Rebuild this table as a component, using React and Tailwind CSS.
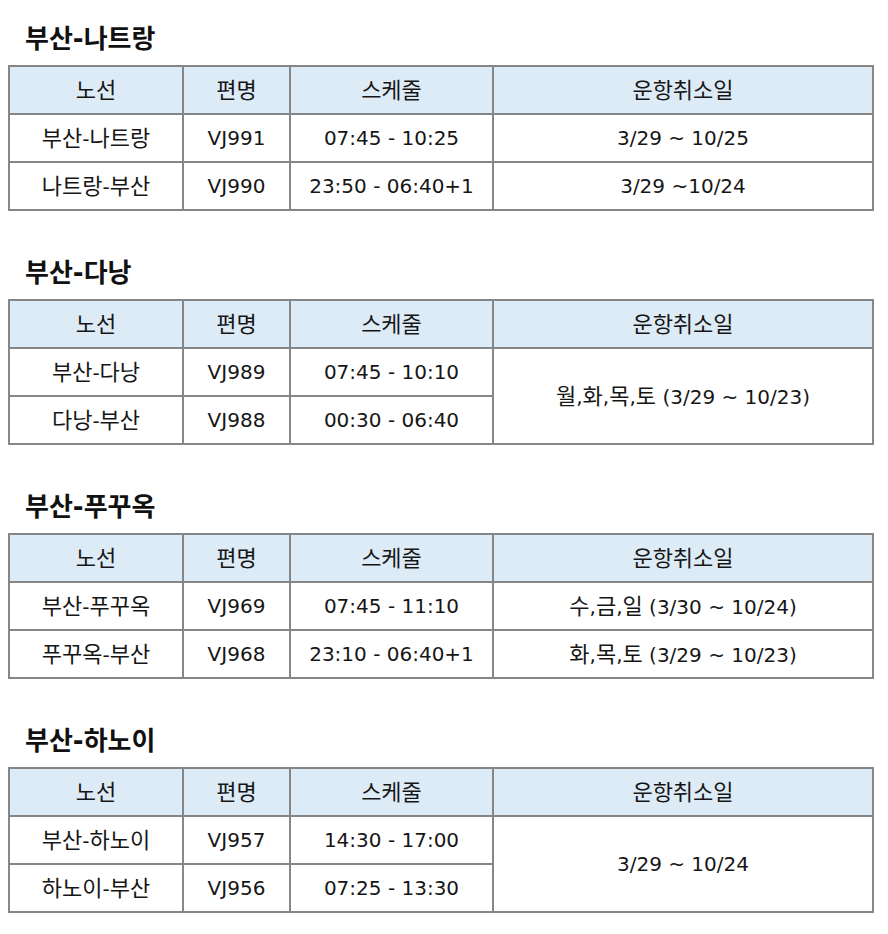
const sections = [
  {
    title: "부산-나트랑",
    rows: [
      ["부산-나트랑", "VJ991", "07:45 - 10:25", "3/29 ~ 10/25"],
      ["나트랑-부산", "VJ990", "23:50 - 06:40+1", "3/29 ~10/24"],
    ],
  },
  {
    title: "부산-다낭",
    merged: "월,화,목,토 (3/29 ~ 10/23)",
    rows: [
      ["부산-다낭", "VJ989", "07:45 - 10:10"],
      ["다낭-부산", "VJ988", "00:30 - 06:40"],
    ],
  },
  {
    title: "부산-푸꾸옥",
    rows: [
      ["부산-푸꾸옥", "VJ969", "07:45 - 11:10", "수,금,일 (3/30 ~ 10/24)"],
      ["푸꾸옥-부산", "VJ968", "23:10 - 06:40+1", "화,목,토 (3/29 ~ 10/23)"],
    ],
  },
  {
    title: "부산-하노이",
    merged: "3/29 ~ 10/24",
    rows: [
      ["부산-하노이", "VJ957", "14:30 - 17:00"],
      ["하노이-부산", "VJ956", "07:25 - 13:30"],
    ],
  },
];

const headers = ["노선", "편명", "스케줄", "운항취소일"];

// hangul runs get a slightly larger size so they match the latin widths
function Txt({ text }) {
  return text.split(/([가-힣]+)/).map((part, i) =>
    /[가-힣]/.test(part) ? (
      <span key={i} className="text-[22px]">
        {part}
      </span>
    ) : (
      <span key={i}>{part}</span>
    )
  );
}

const cell = "border-2 border-[#868686] text-center align-middle h-[48px] p-0";

function RouteTable({ section }) {
  return (
    <section>
      <h2 className="pl-[17px] mb-[10px] text-[26px] leading-8 font-bold text-[#111]">
        {section.title}
      </h2>
      <table className="table-fixed border-collapse border-2 border-[#868686] w-[866px]">
        <colgroup>
          <col className="w-[174px]" />
          <col className="w-[107px]" />
          <col className="w-[203px]" />
          <col />
        </colgroup>
        <thead>
          <tr className="bg-[#ddebf7]">
            {headers.map((h) => (
              <th key={h} className={`${cell} font-normal`}>
                <Txt text={h} />
              </th>
            ))}
          </tr>
        </thead>
        <tbody>
          {section.rows.map((row, r) => (
            <tr key={r}>
              {row.slice(0, 3).map((c, i) => (
                <td key={i} className={cell}>
                  <Txt text={c} />
                </td>
              ))}
              {section.merged ? (
                r === 0 && (
                  <td rowSpan={2} className={cell}>
                    <Txt text={section.merged} />
                  </td>
                )
              ) : (
                <td className={cell}>
                  <Txt text={row[3]} />
                </td>
              )}
            </tr>
          ))}
        </tbody>
      </table>
    </section>
  );
}

export default function App() {
  return (
    <main
      className="min-h-[934px] bg-white pt-[23px] pl-[8px] flex flex-col gap-[46px] text-[20px] text-[#161616]"
      style={{ fontFamily: '"DejaVu Sans", "Noto Sans CJK KR", sans-serif' }}
    >
      {sections.map((s) => (
        <RouteTable key={s.title} section={s} />
      ))}
    </main>
  );
}
